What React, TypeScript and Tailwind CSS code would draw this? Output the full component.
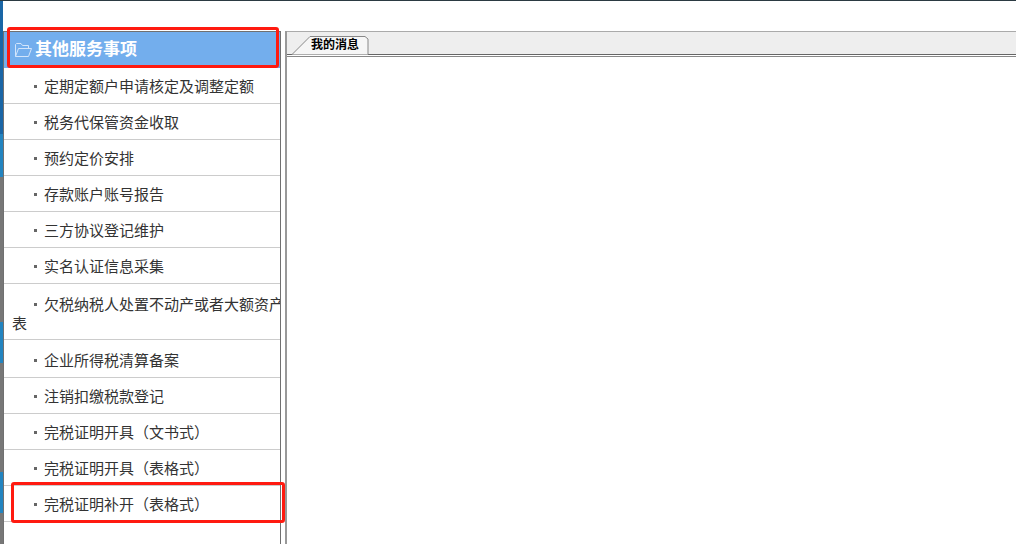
const firstItems = [
  "定期定额户申请核定及调整定额",
  "税务代保管资金收取",
  "预约定价安排",
  "存款账户账号报告",
  "三方协议登记维护",
  "实名认证信息采集",
];

const laterItems = [
  { label: "企业所得税清算备案", rowClass: "h-[38px] pt-[6px]" },
  { label: "注销扣缴税款登记", rowClass: "h-9 pt-1" },
  { label: "完税证明开具（文书式）", rowClass: "h-9 pt-1" },
  { label: "完税证明开具（表格式）", rowClass: "h-9 pt-1" },
  { label: "完税证明补开（表格式）", rowClass: "h-9 pt-1" },
];

function Bullet() {
  return <span className="inline-block w-[3px] h-[3px] bg-[#666] mr-[7px] mb-[3px] align-middle" />;
}

function FolderIcon() {
  return (
    <svg width="17" height="14" viewBox="0 0 17 14" fill="none" stroke="#d3e5fb" strokeWidth="1" className="shrink-0">
      <path d="M0.5 13.5V1.5L1.5 0.5H6L7.5 2.5H13.5V5.5" />
      <path d="M0.5 13.5L3.5 5.5H16.5L13.5 13.5H0.5Z" />
    </svg>
  );
}

export default function App() {
  return (
    <div className="relative w-[1016px] h-[544px] overflow-hidden bg-white font-['Liberation_Sans','Noto_Sans_CJK_SC',sans-serif]">
      <div className="h-px bg-[#2b3a42]" />
      <div className="flex h-[543px]">
        {/* 左边露出的窗口 */}
        <div className="w-[3px] shrink-0 flex flex-col">
          <div className="h-[133px] bg-[#1a66a6]" />
          <div className="h-[43px] bg-[#2384c0]" />
          <div className="h-[145px] bg-[#777]" />
          <div className="h-[41px] bg-[#2384c0]" />
          <div className="h-[109px] bg-[#777]" />
          <div className="h-[41px] bg-[#2384c0]" />
          <div className="flex-1 bg-[#777]" />
        </div>

        <div className="flex flex-1 pt-[30px]">
          {/* 左侧菜单 */}
          <aside className="w-[278px] shrink-0 border-x border-t border-[#707070] text-[15px] text-[#333] overflow-hidden">
            <div className="flex items-center gap-[3px] h-9 pl-[11px] bg-[#73aeed] text-white font-bold text-[17px]">
              <FolderIcon />
              <span>其他服务事项</span>
            </div>
            {firstItems.map((label) => (
              <div key={label} className="h-9 pt-1 flex items-center pl-[30px] border-b border-[#ccc] whitespace-nowrap">
                <Bullet />
                {label}
              </div>
            ))}
            <div className="h-14 pt-[11px] pl-[8px] border-b border-[#ccc] leading-[19px] whitespace-nowrap overflow-hidden">
              <span className="pl-[22px]">
                <Bullet />
                欠税纳税人处置不动产或者大额资产
              </span>
              <br />表
            </div>
            {laterItems.map((item) => (
              <div key={item.label} className={`${item.rowClass} flex items-center pl-[30px] border-b border-[#ccc] whitespace-nowrap`}>
                <Bullet />
                {item.label}
              </div>
            ))}
          </aside>

          {/* 右侧标签页 */}
          <main className="ml-1 flex-1 border-l-2 border-[#999]">
            <div className="relative h-[24px] bg-[#eee] border-t border-[#aaa] border-b border-b-[#666]">
              <svg width="84" height="23" viewBox="0 0 84 23" fill="none" className="absolute left-0 top-0">
                <path d="M5 22.5L23 4.5H78L81 7V22.5" fill="#f6f6f6" stroke="#888" />
              </svg>
              <span className="absolute left-[24px] top-[5px] text-[12px] leading-[16px] font-bold text-black">我的消息</span>
            </div>
            <div className="h-px mt-px bg-[#888]" />
          </main>
        </div>
      </div>

      {/* 红色标注框 */}
      <div className="absolute left-[7px] top-[27px] w-[272px] h-[41px] border-[3px] border-[#ff1a10] rounded-[3px]" />
      <div className="absolute left-[11px] top-[482px] w-[274px] h-[41px] border-[3px] border-[#ff1a10] rounded-[3px]" />
    </div>
  );
}
